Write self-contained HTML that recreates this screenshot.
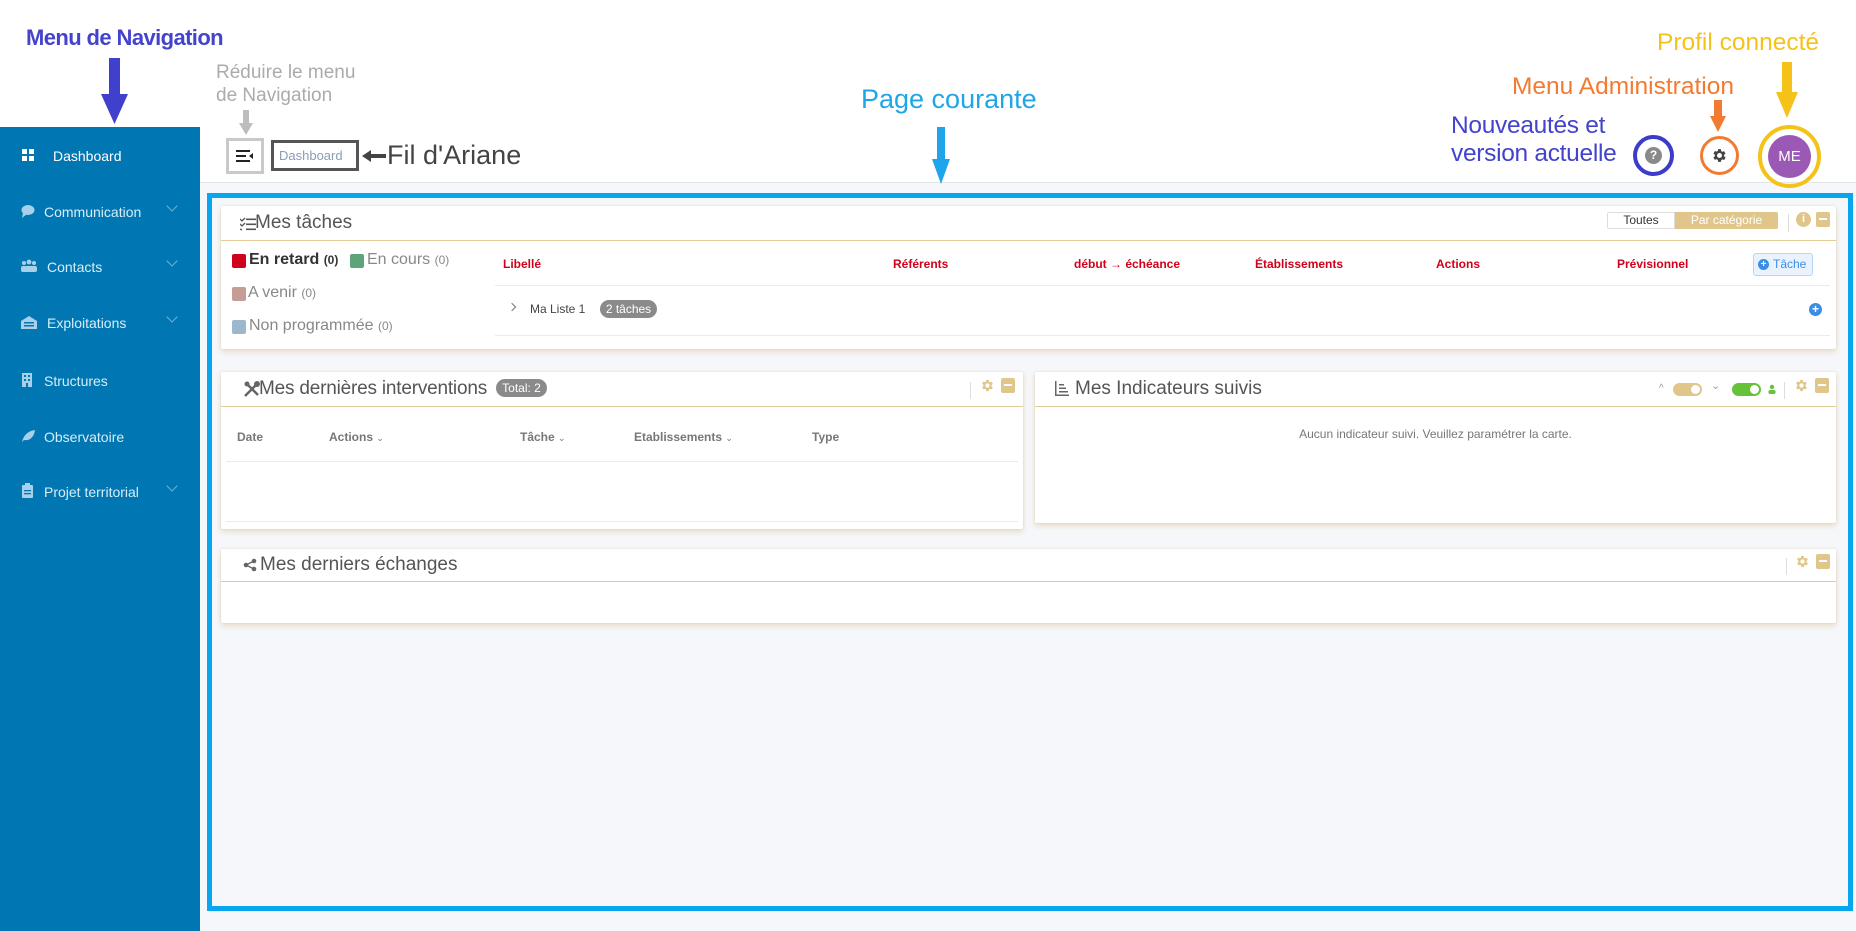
<!DOCTYPE html>
<html><head><meta charset="utf-8">
<style>
*{margin:0;padding:0;box-sizing:border-box}
body{width:1856px;height:931px;position:relative;overflow:hidden;background:#fff;font-family:"Liberation Sans",Arial,sans-serif;}
.a{position:absolute;white-space:nowrap}
.side{position:absolute;left:0;top:127px;width:200px;height:804px;background:#0077b3}
.si{position:absolute;left:0;color:#d8ecf7;font-size:14px;white-space:nowrap;width:200px}
.si svg{position:absolute;left:20px;top:-1px}
.si span{position:absolute;left:44px;top:0;white-space:nowrap}
.chev{position:absolute;left:168px;top:0;width:8px;height:8px;border-right:1px solid #6fb3d9;border-bottom:1px solid #6fb3d9;transform:rotate(45deg)}
.card{position:absolute;background:#fff;box-shadow:0 3px 6px rgba(215,190,140,.45),0 0 2px rgba(200,180,140,.4);border-radius:2px}
.ch{position:absolute;left:0;right:0;top:0;border-bottom:1px solid #e3cd96}
.tt{position:absolute;font-size:19px;color:#555}
.th{position:absolute;font-size:12px;font-weight:bold;color:#d0021b}
.gh{position:absolute;font-size:12px;font-weight:bold;color:#777}
.line{position:absolute;height:1px;background:#e8ebf2}
.gold{background:#e0c68a}
</style></head><body>
<div class="a" style="left:0;top:183px;width:1856px;height:748px;background:#f6f7fb"></div>
<div class="a" style="left:200px;top:182px;width:1656px;height:1px;background:#e2e4ea"></div>

<div class="a" style="left:26px;top:25px;font-size:22px;font-weight:bold;color:#4343cc;letter-spacing:-0.6px">Menu de Navigation</div>
<svg class="a" style="left:101px;top:58px" width="27" height="66"><rect x="8" y="0" width="11" height="38" fill="#4040cc"/><polygon points="0,36 27,36 13.5,66" fill="#4040cc"/></svg>

<div class="side"></div>
<div class="si" style="top:148px;color:#fff"><svg width="16" height="16"><rect x="2" y="2" width="5" height="5" fill="#fff"/><rect x="9" y="2" width="5" height="5" fill="#fff"/><rect x="2" y="9" width="5" height="5" fill="#fff"/><rect x="9" y="9" width="5" height="5" fill="#fff"/></svg><span style="left:53px">Dashboard</span></div>
<div class="si" style="top:204px"><svg width="16" height="16"><ellipse cx="8" cy="7" rx="6.5" ry="5" fill="#a8d0e8"/><polygon points="3,10 2,15 7,11" fill="#a8d0e8"/></svg><span>Communication</span><div class="chev" style="top:-2px"></div></div>
<div class="si" style="top:259px"><svg width="18" height="16"><circle cx="4" cy="5" r="2" fill="#a8d0e8"/><circle cx="9" cy="4" r="2.4" fill="#a8d0e8"/><circle cx="14" cy="5" r="2" fill="#a8d0e8"/><rect x="1" y="8" width="16" height="6" rx="2" fill="#a8d0e8"/></svg><span style="left:47px">Contacts</span><div class="chev" style="top:-2px"></div></div>
<div class="si" style="top:315px"><svg width="18" height="16"><path d="M1 7 L9 2 L17 7 V15 H1Z" fill="#a8d0e8"/><rect x="4" y="8" width="10" height="1.5" fill="#0077b3"/><rect x="4" y="11" width="10" height="1.5" fill="#0077b3"/></svg><span style="left:47px">Exploitations</span><div class="chev" style="top:-2px"></div></div>
<div class="si" style="top:373px"><svg width="16" height="16"><rect x="2" y="1" width="10" height="14" fill="#a8d0e8"/><rect x="4" y="3" width="2" height="2" fill="#0077b3"/><rect x="8" y="3" width="2" height="2" fill="#0077b3"/><rect x="4" y="7" width="2" height="2" fill="#0077b3"/><rect x="8" y="7" width="2" height="2" fill="#0077b3"/><rect x="6" y="11" width="2" height="4" fill="#0077b3"/></svg><span>Structures</span></div>
<div class="si" style="top:429px"><svg width="16" height="16"><path d="M2 14 C4 6 9 3 15 2 C14 9 10 13 4 12Z" fill="#a8d0e8"/></svg><span>Observatoire</span></div>
<div class="si" style="top:484px"><svg width="16" height="16"><rect x="2" y="2" width="11" height="13" rx="1" fill="#a8d0e8"/><rect x="5" y="0" width="5" height="3" fill="#a8d0e8"/><rect x="4" y="7" width="7" height="1.3" fill="#0077b3"/><rect x="4" y="10" width="7" height="1.3" fill="#0077b3"/></svg><span>Projet territorial</span><div class="chev" style="top:-2px"></div></div>

<div class="a" style="left:216px;top:61px;font-size:19px;color:#ababab;line-height:23px">Réduire le menu<br>de Navigation</div>
<svg class="a" style="left:239px;top:110px" width="14" height="25"><rect x="4" y="0" width="6" height="14" fill="#bdbdbd"/><polygon points="0,13 14,13 7,25" fill="#bdbdbd"/></svg>
<div class="a" style="left:226px;top:138px;width:38px;height:36px;border:3px solid #c9c9c9;background:#fff"></div>
<svg class="a" style="left:236px;top:149px" width="18" height="14"><rect x="0" y="1" width="14" height="2" fill="#222"/><rect x="0" y="6" width="10" height="2" fill="#222"/><rect x="0" y="11" width="14" height="2" fill="#222"/><polygon points="17,4 13,7 17,10" fill="#222"/></svg>
<div class="a" style="left:271px;top:140px;width:88px;height:31px;border:3px solid #555;background:#fff;font-size:13px;color:#8b9cb8;padding:5px 0 0 5px">Dashboard</div>
<svg class="a" style="left:362px;top:150px" width="24" height="12"><polygon points="0,6 9,0 9,4 24,4 24,8 9,8 9,12" fill="#444"/></svg>
<div class="a" style="left:387px;top:140px;font-size:27px;color:#444">Fil d'Ariane</div>

<div class="a" style="left:861px;top:84px;font-size:27px;color:#1ea5ea">Page courante</div>
<svg class="a" style="left:932px;top:127px" width="18" height="57"><rect x="5" y="0" width="8" height="34" fill="#1ea5ea"/><polygon points="0,32 18,32 9,57" fill="#1ea5ea"/></svg>

<div class="a" style="left:1657px;top:29px;font-size:24.5px;color:#f5c21a">Profil connecté</div>
<svg class="a" style="left:1776px;top:62px" width="22" height="56"><rect x="6" y="0" width="10" height="32" fill="#f5c21a"/><polygon points="0,30 22,30 11,56" fill="#f5c21a"/></svg>
<div class="a" style="left:1512px;top:73px;font-size:24.5px;color:#f47a30">Menu Administration</div>
<svg class="a" style="left:1710px;top:100px" width="16" height="32"><rect x="4" y="0" width="8" height="18" fill="#f47a30"/><polygon points="0,16 16,16 8,32" fill="#f47a30"/></svg>
<div class="a" style="left:1451px;top:112px;font-size:24.5px;color:#4343cc;line-height:28px;letter-spacing:-0.3px">Nouveautés et<br>version actuelle</div>
<div class="a" style="left:1633px;top:135px;width:41px;height:41px;border:4px solid #3c3cc8;border-radius:50%"></div>
<div class="a" style="left:1645px;top:147px;width:17px;height:17px;border-radius:50%;background:#8a8a8a;color:#fff;font-size:12px;font-weight:bold;text-align:center;line-height:17px">?</div>
<div class="a" style="left:1700px;top:136px;width:39px;height:39px;border:3px solid #f47a30;border-radius:50%"></div>
<svg class="a" style="left:1711px;top:147px" width="17" height="17" viewBox="0 0 24 24"><path fill="#444" d="M19.4 13a7.5 7.5 0 000-2l2.1-1.6-2-3.5-2.5 1a7 7 0 00-1.7-1L15 3h-4l-.4 2.6a7 7 0 00-1.7 1l-2.5-1-2 3.5L6.5 11a7.5 7.5 0 000 2l-2.1 1.6 2 3.5 2.5-1a7 7 0 001.7 1L11 21h4l.4-2.6a7 7 0 001.7-1l2.5 1 2-3.5zM13 15.5a3.5 3.5 0 110-7 3.5 3.5 0 010 7z" transform="translate(-1 0)"/></svg>
<div class="a" style="left:1758px;top:125px;width:63px;height:63px;border:4px solid #f5c21a;border-radius:50%"></div>
<div class="a" style="left:1768px;top:135px;width:43px;height:43px;border-radius:50%;background:#9b59b6;color:#fff;font-size:15px;text-align:center;line-height:43px">ME</div>

<div class="a" style="left:207px;top:193px;width:1646px;height:718px;border:5px solid #06a7ef"></div>

<div class="card" style="left:221px;top:206px;width:1615px;height:143px">
 <div class="ch" style="height:35px"></div>
 <svg class="a" style="left:19px;top:11px" width="16" height="14"><path d="M0 2 l2 2 l3-3 M0 7 l2 2 l3-3 M0 12 l2 1" stroke="#555" stroke-width="1.3" fill="none"/><rect x="6" y="1.5" width="10" height="1.6" fill="#555"/><rect x="6" y="6.5" width="10" height="1.6" fill="#555"/><rect x="6" y="11.5" width="10" height="1.6" fill="#555"/></svg>
 <div class="tt" style="left:34px;top:6px">Mes tâches</div>
 <div class="a" style="left:1386px;top:6px;width:68px;height:17px;border:1px solid #ddd;border-radius:2px 0 0 2px;font-size:12px;color:#333;text-align:center;line-height:15px">Toutes</div>
 <div class="a" style="left:1454px;top:6px;width:103px;height:17px;background:#e0c68a;border-radius:0 2px 2px 0;font-size:12px;color:#fff;text-align:center;line-height:17px">Par catégorie</div>
 <div class="a" style="left:1567px;top:8px;width:1px;height:18px;background:#ddd"></div>
 <div class="a" style="left:1575px;top:6px;width:15px;height:15px;border-radius:50%;background:#e0c68a;color:#fff;font-size:11px;font-weight:bold;text-align:center;line-height:15px">i</div>
 <div class="a gold" style="left:1595px;top:6px;width:14px;height:15px;border-radius:2px"><div style="position:absolute;left:3px;top:6px;width:8px;height:2px;background:#fff"></div></div>
 <div class="a" style="left:11px;top:48px;width:14px;height:14px;background:#d0021b;border-radius:2px"></div>
 <div class="a" style="left:28px;top:45px;font-size:16px;color:#333;font-weight:bold">En retard <span style="font-size:12px">(0)</span></div>
 <div class="a" style="left:129px;top:48px;width:14px;height:14px;background:#5fa37a;border-radius:2px"></div>
 <div class="a" style="left:146px;top:45px;font-size:16px;color:#888">En cours <span style="font-size:12px">(0)</span></div>
 <div class="a" style="left:11px;top:81px;width:14px;height:14px;background:#c49d96;border-radius:2px"></div>
 <div class="a" style="left:27px;top:78px;font-size:16px;color:#888">A venir <span style="font-size:12px">(0)</span></div>
 <div class="a" style="left:11px;top:114px;width:14px;height:14px;background:#9db7cc;border-radius:2px"></div>
 <div class="a" style="left:28px;top:111px;font-size:16px;color:#888">Non programmée <span style="font-size:12px">(0)</span></div>
 <div class="th" style="left:282px;top:51px">Libellé</div>
 <div class="th" style="left:672px;top:51px">Référents</div>
 <div class="th" style="left:853px;top:51px">début → échéance</div>
 <div class="th" style="left:1034px;top:51px">Établissements</div>
 <div class="th" style="left:1215px;top:51px">Actions</div>
 <div class="th" style="left:1396px;top:51px">Prévisionnel</div>
 <div class="a" style="left:1532px;top:47px;width:60px;height:23px;border:1px solid #b8d6f5;background:#eaf3fd;border-radius:3px;font-size:12px;color:#3a8ee6;line-height:21px;padding-left:19px">Tâche</div>
 <div class="a" style="left:1537px;top:53px;width:11px;height:11px;border-radius:50%;background:#3a8ee6;color:#fff;font-size:10px;line-height:11px;text-align:center;font-weight:bold">+</div>
 <div class="line" style="left:274px;top:79px;width:1335px"></div>
 <div class="line" style="left:274px;top:129px;width:1335px"></div>
 <div class="a" style="left:288px;top:98px;width:6px;height:6px;border-right:1px solid #777;border-top:1px solid #777;transform:rotate(45deg)"></div>
 <div class="a" style="left:309px;top:96px;font-size:12px;color:#444">Ma Liste 1</div>
 <div class="a" style="left:379px;top:94px;width:57px;height:18px;border-radius:9px;background:#8a8a8a;color:#fff;font-size:12px;text-align:center;line-height:18px">2 tâches</div>
 <div class="a" style="left:1588px;top:97px;width:13px;height:13px;border-radius:50%;background:#3a8ee6;color:#fff;font-size:12px;font-weight:bold;line-height:13px;text-align:center">+</div>
</div>

<div class="card" style="left:221px;top:372px;width:802px;height:157px">
 <div class="ch" style="height:35px"></div>
 <svg class="a" style="left:22px;top:8px" width="18" height="18" viewBox="0 0 18 18"><path d="M2 16 L15 3 M3 3 L15 15" stroke="#666" stroke-width="2.5"/><circle cx="14" cy="4" r="3" fill="#666"/><circle cx="4" cy="4" r="2.5" fill="#666"/></svg>
 <div class="tt" style="left:38px;top:6px;letter-spacing:-0.2px">Mes dernières interventions</div>
 <div class="a" style="left:275px;top:7px;width:51px;height:18px;border-radius:9px;background:#8a8a8a;color:#fff;font-size:12px;text-align:center;line-height:18px">Total: 2</div>
 <div class="a" style="left:749px;top:10px;width:1px;height:17px;background:#ddd"></div>
 <svg class="a" style="left:759px;top:6px" width="15" height="15" viewBox="0 0 24 24"><path fill="#e0c68a" d="M19.4 13a7.5 7.5 0 000-2l2.1-1.6-2-3.5-2.5 1a7 7 0 00-1.7-1L15 3h-4l-.4 2.6a7 7 0 00-1.7 1l-2.5-1-2 3.5L6.5 11a7.5 7.5 0 000 2l-2.1 1.6 2 3.5 2.5-1a7 7 0 001.7 1L11 21h4l.4-2.6a7 7 0 001.7-1l2.5 1 2-3.5zM13 15.5a3.5 3.5 0 110-7 3.5 3.5 0 010 7z" transform="translate(-1 0)"/></svg>
 <div class="a gold" style="left:780px;top:6px;width:14px;height:15px;border-radius:2px"><div style="position:absolute;left:3px;top:6px;width:8px;height:2px;background:#fff"></div></div>
 <div class="gh" style="left:16px;top:58px">Date</div>
 <div class="gh" style="left:108px;top:58px">Actions <span style="font-weight:normal;font-size:9px">⌄</span></div>
 <div class="gh" style="left:299px;top:58px">Tâche <span style="font-weight:normal;font-size:9px">⌄</span></div>
 <div class="gh" style="left:413px;top:58px">Etablissements <span style="font-weight:normal;font-size:9px">⌄</span></div>
 <div class="gh" style="left:591px;top:58px">Type</div>
 <div class="line" style="left:5px;top:89px;width:792px"></div>
 <div class="line" style="left:5px;top:149px;width:792px"></div>
</div>

<div class="card" style="left:1035px;top:372px;width:801px;height:151px">
 <div class="ch" style="height:35px"></div>
 <svg class="a" style="left:20px;top:9px" width="14" height="15"><rect x="0" y="0" width="1.5" height="15" fill="#666"/><rect x="0" y="13.5" width="14" height="1.5" fill="#666"/><rect x="4" y="3" width="5" height="1.5" fill="#666"/><rect x="4" y="6.5" width="7" height="1.5" fill="#666"/><rect x="4" y="10" width="9" height="1.5" fill="#666"/></svg>
 <div class="tt" style="left:40px;top:6px">Mes Indicateurs suivis</div>
 <div class="a" style="left:624px;top:11px;font-size:10px;color:#999">^</div>
 <div class="a" style="left:638px;top:11px;width:29px;height:13px;border-radius:7px;background:#e0c68a"><div style="position:absolute;right:2px;top:2px;width:9px;height:9px;border-radius:50%;background:#fff"></div></div>
 <div class="a" style="left:676px;top:7px;font-size:11px;color:#99b">⌄</div>
 <div class="a" style="left:697px;top:11px;width:29px;height:13px;border-radius:7px;background:#67c23a"><div style="position:absolute;right:2px;top:2px;width:9px;height:9px;border-radius:50%;background:#fff"></div></div>
 <svg class="a" style="left:733px;top:12px" width="8" height="10"><circle cx="4" cy="3" r="2.2" fill="#67c23a"/><rect x="0.5" y="6" width="7" height="4" rx="1.5" fill="#67c23a"/></svg>
 <div class="a" style="left:749px;top:10px;width:1px;height:17px;background:#ddd"></div>
 <svg class="a" style="left:759px;top:6px" width="15" height="15" viewBox="0 0 24 24"><path fill="#e0c68a" d="M19.4 13a7.5 7.5 0 000-2l2.1-1.6-2-3.5-2.5 1a7 7 0 00-1.7-1L15 3h-4l-.4 2.6a7 7 0 00-1.7 1l-2.5-1-2 3.5L6.5 11a7.5 7.5 0 000 2l-2.1 1.6 2 3.5 2.5-1a7 7 0 001.7 1L11 21h4l.4-2.6a7 7 0 001.7-1l2.5 1 2-3.5zM13 15.5a3.5 3.5 0 110-7 3.5 3.5 0 010 7z" transform="translate(-1 0)"/></svg>
 <div class="a gold" style="left:780px;top:6px;width:14px;height:15px;border-radius:2px"><div style="position:absolute;left:3px;top:6px;width:8px;height:2px;background:#fff"></div></div>
 <div class="a" style="left:0;width:801px;top:55px;text-align:center;font-size:12px;color:#777">Aucun indicateur suivi. Veuillez paramétrer la carte.</div>
</div>

<div class="card" style="left:221px;top:549px;width:1615px;height:74px">
 <div class="ch" style="height:33px"></div>
 <svg class="a" style="left:22px;top:9px" width="14" height="14"><circle cx="11" cy="3" r="2.3" fill="#666"/><circle cx="3" cy="7" r="2.3" fill="#666"/><circle cx="11" cy="11" r="2.3" fill="#666"/><path d="M3 7 L11 3 M3 7 L11 11" stroke="#666" stroke-width="1.3"/></svg>
 <div class="tt" style="left:39px;top:5px">Mes derniers échanges</div>
 <div class="a" style="left:1565px;top:9px;width:1px;height:17px;background:#ddd"></div>
 <svg class="a" style="left:1574px;top:5px" width="15" height="15" viewBox="0 0 24 24"><path fill="#e0c68a" d="M19.4 13a7.5 7.5 0 000-2l2.1-1.6-2-3.5-2.5 1a7 7 0 00-1.7-1L15 3h-4l-.4 2.6a7 7 0 00-1.7 1l-2.5-1-2 3.5L6.5 11a7.5 7.5 0 000 2l-2.1 1.6 2 3.5 2.5-1a7 7 0 001.7 1L11 21h4l.4-2.6a7 7 0 001.7-1l2.5 1 2-3.5zM13 15.5a3.5 3.5 0 110-7 3.5 3.5 0 010 7z" transform="translate(-1 0)"/></svg>
 <div class="a gold" style="left:1595px;top:5px;width:14px;height:15px;border-radius:2px"><div style="position:absolute;left:3px;top:6px;width:8px;height:2px;background:#fff"></div></div>
</div>
</body></html>
